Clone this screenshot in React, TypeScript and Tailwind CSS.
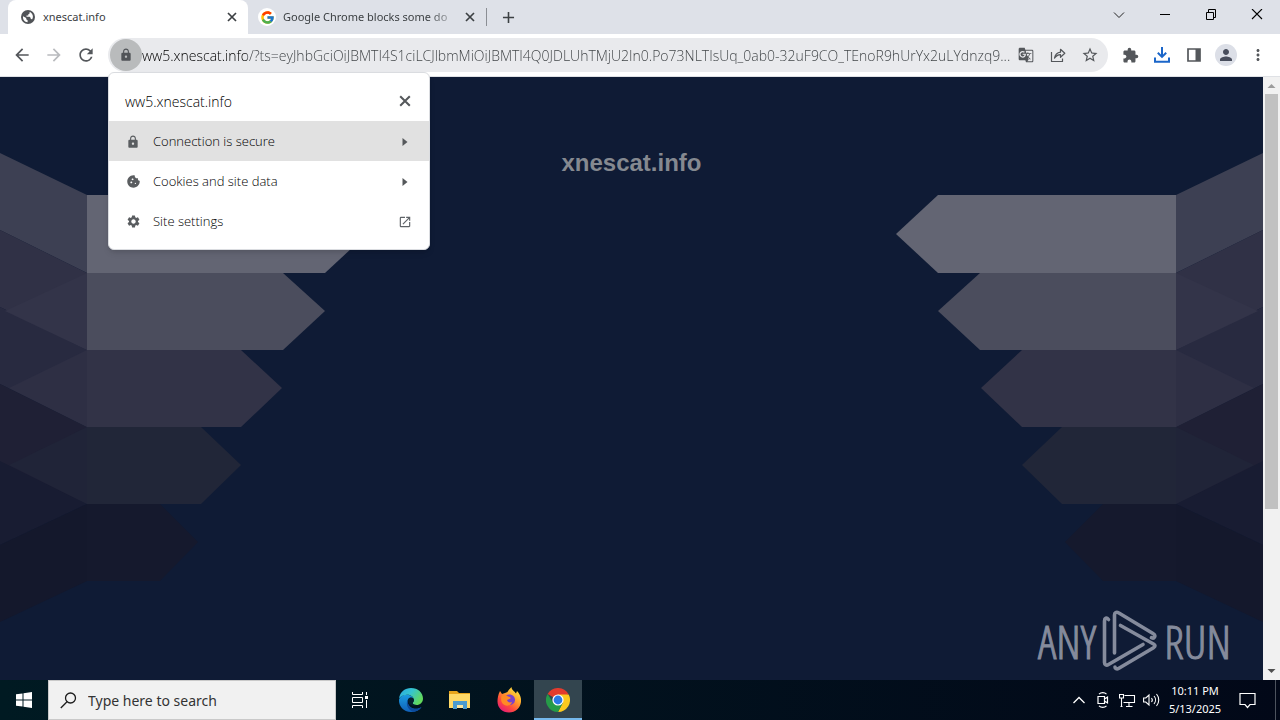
import type { ReactNode } from "react";
import {
  MdAdd,
  MdArrowBack,
  MdArrowForward,
  MdCookie,
  MdExtension,
  MdGTranslate,
  MdLock,
  MdMoreVert,
  MdOpenInNew,
  MdPerson,
  MdRefresh,
  MdSettings,
  MdStarBorder,
} from "react-icons/md";
import { FcGoogle } from "react-icons/fc";

const URL_TEXT =
  "ww5.xnescat.info/?ts=eyJhbGciOiJBMTI4S1ciLCJlbmMiOiJBMTI4Q0JDLUhTMjU2In0.Po73NLTIsUq_0ab0-32uF9CO_TEnoR9hUrYx2uLYdnzq9...";

function IconButton({ label, className = "", children }: { label: string; className?: string; children: ReactNode }) {
  return (
    <button type="button" aria-label={label} className={`flex h-8 w-8 shrink-0 items-center justify-center ${className}`}>
      {children}
    </button>
  );
}

function CloseIcon({ size }: { size: number }) {
  return (
    <svg width={size} height={size} viewBox="0 0 10 10" fill="none" stroke="currentColor" strokeWidth="1.700" aria-hidden="true">
      <path d="m1 1 8 8M9 1 1 9" />
    </svg>
  );
}

function GlobeIcon() {
  return (
    <svg width="14" height="14" viewBox="0 0 14 14" className="shrink-0" aria-hidden="true">
      <circle cx="7" cy="7" r="7" fill="#505357" />
      <path d="M2 6.2 5.2 8v1.3l1.4 1v1.9C3.800 12 1.700 9.700 2 6.200Z" fill="#fff" />
      <path d="M6 2.200 8.600 1.900v1.500L7.300 4.300v1.300H5.500v1.200h3.200l1 1.200v1l1.500.2C13.100 6 11 2.500 8.600 1.900L6 2.200Z" fill="#fff" />
    </svg>
  );
}

function TabStrip() {
  return (
    <header className="flex h-[34px] shrink-0 items-stretch bg-[#dee1e8]">
      <div role="tablist" className="flex items-stretch pl-2">
        <div role="tab" aria-selected="true" className="flex w-60 items-center rounded-t-lg bg-white pr-2 pl-[13px]">
          <GlobeIcon />
          <span className="ml-2 flex-1 text-[11px] text-[#3c4043]">xnescat.info</span>
          <button type="button" aria-label="Close tab" className="flex h-4 w-4 items-center justify-center text-[#3c4043]">
            <CloseIcon size={10} />
          </button>
        </div>
        <div role="tab" aria-selected="false" className="my-2 flex w-[239px] items-center border-r border-[#8b8e94] pr-2 pl-[10px]">
          <span className="flex h-[18px] w-[18px] items-center justify-center rounded-full bg-white">
            <FcGoogle size={15} />
          </span>
          <span className="ml-[7px] shrink-0 text-[11px] whitespace-nowrap text-[#3c4043] [mask-image:linear-gradient(to_right,black_145px,transparent_178px)]">
            Google Chrome blocks some do
          </span>
          <button type="button" aria-label="Close tab" className="ml-auto flex h-4 w-4 items-center justify-center text-[#3c4043]">
            <CloseIcon size={10} />
          </button>
        </div>
      </div>
      <button type="button" aria-label="New tab" className="ml-3 text-[#3c4043]">
        <MdAdd size={19} />
      </button>
      <div className="ml-auto flex items-center pb-1">
        <button type="button" aria-label="Search tabs" className="flex w-[46px] justify-center">
          <svg width="12" height="12" viewBox="0 0 12 12" fill="none" stroke="#222" aria-hidden="true">
            <path d="m1 3.500 5 5 5-5" />
          </svg>
        </button>
        <button type="button" aria-label="Minimize" className="flex w-[46px] justify-center">
          <svg width="12" height="12" viewBox="0 0 12 12" fill="none" stroke="#000" aria-hidden="true">
            <path d="M1 5.500h10" />
          </svg>
        </button>
        <button type="button" aria-label="Restore" className="flex w-[46px] justify-center">
          <svg width="12" height="12" viewBox="0 0 12 12" fill="none" stroke="#000" aria-hidden="true">
            <path d="M1.500 3.500h7v7h-7zM3.500 3.500v-3h7v8h-2" />
          </svg>
        </button>
        <button type="button" aria-label="Close window" className="flex w-[46px] justify-center">
          <svg width="12" height="12" viewBox="0 0 12 12" fill="none" stroke="#000" strokeWidth="1.1" aria-hidden="true">
            <path d="m1 0 10 10M11 0 1 10" />
          </svg>
        </button>
      </div>
    </header>
  );
}

function Toolbar() {
  return (
    <div className="flex h-[43px] shrink-0 items-center border-b border-[#dfe1e5] bg-white pr-[6px] pl-[6px] text-[#54575b]">
      <IconButton label="Back">
        <MdArrowBack size={20} />
      </IconButton>
      <IconButton label="Forward" className="text-[#b9bbbe]">
        <MdArrowForward size={20} />
      </IconButton>
      <IconButton label="Reload">
        <MdRefresh size={20} />
      </IconButton>
      <div className="relative ml-[6px] flex h-[34px] min-w-0 flex-1 items-center rounded-full bg-[#e9eaed] pr-[2px] pl-[2px]">
        <button
          type="button"
          aria-label="View site information"
          aria-expanded="true"
          className="flex h-8 w-8 shrink-0 items-center justify-center rounded-full bg-[#b9bbbc] text-[#505357]"
        >
          <MdLock size={14} />
        </button>
        <input
          aria-label="Address and search bar"
          readOnly
          value={URL_TEXT}
          className="min-w-0 flex-1 bg-[linear-gradient(to_right,#000_105px,#3c4043_105px)] bg-clip-text font-['Open_Sans',sans-serif] text-[14px] font-light text-transparent outline-none"
        />
        <IconButton label="Translate this page">
          <MdGTranslate size={16} />
        </IconButton>
        <IconButton label="Share this page">
          <svg width="16" height="16" viewBox="0 0 16 16" fill="none" stroke="currentColor" strokeWidth="1.200" aria-hidden="true">
            <path d="M1.500 5v9.500h11V11.500M4.500 11.200c.6-3.700 2.600-5.600 6-6V2.300l4.300 4-4.300 4V7.600c-2.700.1-4.500 1.300-6 3.600Z" strokeLinejoin="round" />
          </svg>
        </IconButton>
        <IconButton label="Bookmark this tab">
          <MdStarBorder size={18} />
        </IconButton>
        <SiteInfo />
      </div>
      <IconButton label="Extensions" className="ml-[6px]">
        <MdExtension size={17} />
      </IconButton>
      <IconButton label="Downloads" className="text-[#1b66c9]">
        <svg width="16" height="16" viewBox="0 0 16 16" fill="none" stroke="currentColor" strokeWidth="2" aria-hidden="true">
          <path d="M8 0v9.500M3.800 5.700 8 9.900l4.200-4.200M1 10.500V14.800h14v-4.300" />
        </svg>
      </IconButton>
      <IconButton label="Side panel">
        <svg width="14" height="14" viewBox="0 0 14 14" aria-hidden="true">
          <path d="M1 1h12v12H1z" fill="none" stroke="currentColor" strokeWidth="1.700" />
          <path d="M8.500 1H13v12H8.500z" fill="currentColor" />
        </svg>
      </IconButton>
      <IconButton label="Profile">
        <span className="flex h-[22px] w-[22px] items-center justify-center rounded-full bg-[#dcdfe7] text-[#484d5c]">
          <MdPerson size={18} />
        </span>
      </IconButton>
      <IconButton label="Menu">
        <MdMoreVert size={18} />
      </IconButton>
    </div>
  );
}

function Caret() {
  return (
    <svg width="12" height="10" viewBox="0 0 12 10" fill="#55585b" aria-hidden="true">
      <path d="M3.500 1v8l5-4z" />
    </svg>
  );
}

function InfoRow({ icon, label, end, active = false }: { icon: ReactNode; label: string; end: ReactNode; active?: boolean }) {
  return (
    <button
      type="button"
      className={`flex h-10 w-full items-center px-4 pt-px font-['Open_Sans',sans-serif] text-[13px] font-light text-black ${active ? "bg-[#e1e1e1]" : ""}`}
    >
      <span className="flex w-4 justify-center text-[#5a5d60]">{icon}</span>
      <span className="ml-3 flex-1 text-left">{label}</span>
      <span className="flex w-4 justify-center text-[#5f6368]">{end}</span>
    </button>
  );
}

function SiteInfo() {
  return (
    <section
      aria-label="Site information"
      className="absolute top-[34px] left-0 z-20 w-[322px] rounded-md border border-[#dadce0] bg-white pt-2 pb-2 shadow-md"
    >
      <div className="flex h-10 items-center justify-between px-4">
        <h2 className="font-['Open_Sans',sans-serif] text-[14px] font-light text-black">ww5.xnescat.info</h2>
        <button type="button" aria-label="Close" className="flex w-4 justify-center text-[#55585b]">
          <CloseIcon size={12} />
        </button>
      </div>
      <InfoRow active icon={<MdLock size={14} />} label="Connection is secure" end={<Caret />} />
      <InfoRow icon={<MdCookie size={15} />} label="Cookies and site data" end={<Caret />} />
      <InfoRow icon={<MdSettings size={15} />} label="Site settings" end={<MdOpenInNew size={14} />} />
    </section>
  );
}

function Ribbons({ className }: { className: string }) {
  return (
    <svg width="370" height="603" viewBox="0 77 370 603" className={className} aria-hidden="true">
      <path d="M0 153 87 195v78L0 230z" fill="#3d4053" />
      <path d="M0 230 87 273v77L0 307z" fill="#303146" />
      <path d="M0 307 87 350v77L0 384z" fill="#282a40" />
      <path d="M0 384 87 427v77L0 465z" fill="#1f2035" />
      <path d="M0 461 87 504 0 545z" fill="#181c32" />
      <path d="M0 545 87 504v77L0 622z" fill="#14182c" />
      <path d="M87 273v77L5 311z" fill="#333449" />
      <path d="M87 350v77L9 388z" fill="#2e2f44" />
      <path d="M87 427v77L9 465z" fill="#202438" />
      <path d="M87 195h238l42 39-42 39H87z" fill="#636573" />
      <path d="M87 273h196l42 38-42 39H87z" fill="#4b4d5d" />
      <path d="M87 350h154l41 38-41 39H87z" fill="#323347" />
      <path d="M87 427h114l40 38-40 39H87z" fill="#212638" />
      <path d="M87 504h73l38 38-38 39H87z" fill="#15192d" />
    </svg>
  );
}

function Watermark() {
  return (
    <div className="absolute right-8 bottom-2 flex items-center gap-[6px] font-['Open_Sans_Condensed_Light','Open_Sans_Condensed','Noto_Sans_ExtraCondensed','Roboto_Condensed','Liberation_Sans_Narrow',sans-serif] text-[46px] leading-[60px] font-light text-[#858b9c] [-webkit-text-stroke:1px_#858b9c]">
      <span>ANY</span>
      <svg width="56" height="62" viewBox="0 0 56 62" fill="none" stroke="currentColor" strokeWidth="3.600" strokeLinecap="round" strokeLinejoin="round" aria-hidden="true">
        <path d="M6.500 9.500C4.500 7 2.500 8 2.500 11v41.500c0 2.500 2 3.200 4 2L41 34.500" />
        <path d="M12.500 43V5c0-2.500 2-3.500 4-2.200L51 23.500c3.500 2.200 1.200 5.500-1.500 4.200" />
        <path d="M18.500 15.500 51.500 34c2 1.200 2 2.500 0 3.700L16.500 58.500c-1.800 1-3.500 0-3.500-1.500" />
      </svg>
      <span>RUN</span>
    </div>
  );
}

function Page() {
  return (
    <main className="flex min-h-0 flex-1">
      <div className="relative min-w-0 flex-1 overflow-hidden bg-[#0f1b35]">
        <Ribbons className="absolute top-0 left-0" />
        <Ribbons className="absolute top-0 right-0 -scale-x-100" />
        <h1 className="relative pt-[70px] text-center font-['Liberation_Sans',sans-serif] text-[24px] leading-8 font-bold text-[#858990]">
          xnescat.info
        </h1>
        <Watermark />
      </div>
      <div className="flex w-[17px] shrink-0 flex-col items-center bg-[#f1f1f1]">
        <svg width="17" height="17" viewBox="0 0 17 17" fill="#9c9c9c" aria-hidden="true">
          <path d="M4.500 11h8l-4-4z" />
        </svg>
        <div className="h-[415px] w-[13px] bg-[#c1c1c1]" />
        <svg width="17" height="17" viewBox="0 0 17 17" fill="#505050" className="mt-auto" aria-hidden="true">
          <path d="M4.500 6h8l-4 4z" />
        </svg>
      </div>
    </main>
  );
}

function EdgeLogo() {
  return (
    <svg width="26" height="26" viewBox="0 0 26 26" aria-hidden="true">
      <defs>
        <linearGradient id="edge-top" x1="0" y1="0" x2="1" y2="0.500">
          <stop offset="0" stopColor="#2aa9e0" />
          <stop offset="0.500" stopColor="#35c4d0" />
          <stop offset="1" stopColor="#62d95c" />
        </linearGradient>
        <linearGradient id="edge-low" x1="0" y1="0" x2="0" y2="1">
          <stop offset="0" stopColor="#1b9be0" />
          <stop offset="1" stopColor="#1060b8" />
        </linearGradient>
      </defs>
      <path d="M1 12.500C2 9.500 5 7.700 8.800 7.700c3.200 0 5.700 1.500 6.700 3.500-3.200-2-6 .3-6 3.300 0 4.500 4 7.300 8.200 7.300 2.300 0 4.300-.8 5.800-1.800C21.500 23.300 17.500 25 13 25 5.500 25 .5 19 1 12.500Z" fill="url(#edge-low)" />
      <path d="M1 11.500C2 5 7 1 13 1c7 0 12 4.700 12 10.500 0 4-3 6.500-6.500 6.500-3 0-4.500-1.200-4-2.200 1-1 1.500-2 1.300-3.500C15.200 9 12 7.500 8.800 7.700 5 8 2.200 9.500 1 11.500Z" fill="url(#edge-top)" />
      <path d="M9.500 12.500C7.500 18 10 23 15.500 24.800 19 24.300 22 22.500 23.500 20c-1.500 1-3.500 1.800-5.800 1.800-4.200 0-8.200-2.800-8.200-9.300Z" fill="#0c4a9c" />
      <path d="M10 12.500c1-2 4-2.300 5.500-.5.800 1.500.3 2.800-.7 3.800-.5 1 1 2.200 4 2.200-3.500 2-9 0-8.800-5.500Z" fill="#06202f" />
    </svg>
  );
}

function FolderLogo() {
  return (
    <svg width="24" height="22" viewBox="0 0 24 22" aria-hidden="true">
      <path d="M1 2h8l2 2h11v15H1z" fill="#e8a51c" />
      <path d="M1 5h21v14H1z" fill="#ffd967" />
      <path d="M5 12h14v8h-4v-4H9v4H5z" fill="#4a9bd0" />
      <path d="M9 16h6v3H9z" fill="#fbe6a0" />
    </svg>
  );
}

function FirefoxLogo() {
  return (
    <svg width="24" height="26" viewBox="0 0 24 26" aria-hidden="true">
      <defs>
        <linearGradient id="fox" x1="0.900" y1="0" x2="0.200" y2="1">
          <stop offset="0" stopColor="#fff04a" />
          <stop offset="0.400" stopColor="#ffa32b" />
          <stop offset="0.700" stopColor="#ff4b3c" />
          <stop offset="1" stopColor="#e3167d" />
        </linearGradient>
      </defs>
      <path d="M3 4 5 7l3-1 2.500-1c1-2 2-3 4-5 0 3 3 4 4.500 6.500L20 4c3 3 4.500 7 4 11-.8 6-5.500 10.500-12 10.500S.5 21 .5 14.500C.5 11 1 8 3 4Z" fill="url(#fox)" />
      <path d="M7.500 11.500c.5-3 3-4.500 6-4 3 .8 4.800 3 4.500 6-.4 3-3 4.700-5.800 4.500-3-.3-5.200-3-4.700-6.500Z" fill="#7941cc" />
      <path d="M4.500 9c2-1.500 5-1 6.500.5 2 .3 2.800 1 2.500 2l-3.500 1.500c.5 2.500 3 3 5 2-1 3.500-4.500 4.500-7.500 3C4.500 16.500 3.500 13 4.500 9Z" fill="#ff8a25" />
    </svg>
  );
}

function ChromeLogo() {
  return (
    <svg width="24" height="24" viewBox="0 0 24 24" aria-hidden="true">
      <path d="M12 12 1.600 6A12 12 0 0 1 22.400 6z" fill="#e33b2e" />
      <path d="M12 6.500h10.700A12 12 0 0 1 12 24l4.800-9.300z" fill="#fcc91f" />
      <path d="M7.200 14.700 1.600 6A12 12 0 0 0 12 24l4.800-9.300z" fill="#269b48" />
      <circle cx="12" cy="12" r="5.600" fill="#fff" />
      <circle cx="12" cy="12" r="4.400" fill="#2b79e6" />
    </svg>
  );
}

function TaskButton({ label, active = false, children }: { label: string; active?: boolean; children: ReactNode }) {
  return (
    <button
      type="button"
      aria-label={label}
      className={`flex h-10 w-12 items-center justify-center ${active ? "border-b-2 border-[#76b9ed] bg-[#33454f] pt-[2px]" : ""}`}
    >
      {children}
    </button>
  );
}

function Taskbar() {
  return (
    <footer className="flex h-10 shrink-0 items-center bg-linear-to-r from-[#001a22] to-[#020818] text-white">
      <TaskButton label="Start">
        <svg width="16" height="16" viewBox="0 0 16 16" fill="#fff" aria-hidden="true">
          <path d="M0 2.300 6.500 1.400v6.100H0zM7.500 1.200 16 0v7.500H7.500zM0 8.500h6.500v6.100L0 13.700zM7.500 8.500H16V16l-8.500-1.200z" />
        </svg>
      </TaskButton>
      <label className="flex h-10 w-72 items-center gap-[11px] border border-[#c9c9c9] bg-[#f1f1f1] pl-[11px]">
        <svg width="17" height="17" viewBox="0 0 17 17" fill="none" stroke="#1c1c1c" strokeWidth="1.300" aria-hidden="true">
          <circle cx="10.500" cy="6" r="5" />
          <path d="M7 9.700.8 16" />
        </svg>
        <input
          aria-label="Search"
          placeholder="Type here to search"
          className="min-w-0 flex-1 bg-transparent text-[14px] outline-none placeholder:text-[#333]"
        />
      </label>
      <TaskButton label="Task view">
        <svg width="18" height="16" viewBox="0 0 18 16" fill="none" stroke="#fff" aria-hidden="true">
          <path d="M1.500 0v2.500h10V0M1.500 5.500h10v5h-10zM1.500 16v-2.500h10V16M15.500 0v3M15.500 8v8" />
          <path d="M14 4h3v3h-3z" fill="#fff" stroke="none" />
        </svg>
      </TaskButton>
      <div className="flex items-center gap-[1px] pl-[3px]">
        <TaskButton label="Microsoft Edge">
          <EdgeLogo />
        </TaskButton>
        <TaskButton label="File Explorer">
          <FolderLogo />
        </TaskButton>
        <TaskButton label="Firefox">
          <FirefoxLogo />
        </TaskButton>
        <TaskButton label="Google Chrome" active>
          <ChromeLogo />
        </TaskButton>
      </div>
      <div className="ml-auto flex items-center">
        <button type="button" aria-label="Show hidden icons" className="flex w-6 justify-center">
          <svg width="14" height="8" viewBox="0 0 14 8" fill="none" stroke="#fff" strokeWidth="1.300" aria-hidden="true">
            <path d="m1.500 7 5.500-5.500L12.500 7" />
          </svg>
        </button>
        <button type="button" aria-label="Meet now" className="flex w-6 justify-center">
          <svg width="14" height="18" viewBox="0 0 14 18" fill="none" stroke="#fff" strokeWidth="1.200" aria-hidden="true">
            <path d="M2 5.500h6.500v7H2zM8.500 8 11.500 6v6l-3-2M3 3.200c2-2 5.500-2 7.500 0M3 14.800c2 2 5.500 2 7.500 0" />
          </svg>
        </button>
        <button type="button" aria-label="Network" className="flex w-6 justify-center">
          <svg width="17" height="15" viewBox="0 0 17 15" fill="none" stroke="#fff" strokeWidth="1.100" aria-hidden="true">
            <path d="M5.500 2.500h10v7h-11M.5 1.500h4v3.500h-4zM2.500 5v8M10 9.500v4M7 13.500h6.500M1.500 13.500h2" />
          </svg>
        </button>
        <button type="button" aria-label="Volume" className="flex w-6 justify-center">
          <svg width="17" height="14" viewBox="0 0 17 14" fill="none" stroke="#fff" strokeWidth="1.100" aria-hidden="true">
            <path d="M.6 5h2.200L6 2v10L2.800 9H.6zM8.500 5c1 1.200 1 2.800 0 4M11 3c2 2.300 2 5.700 0 8M13.500 1c3 3.500 3 8.500 0 12" />
          </svg>
        </button>
        <time className="w-16 text-center text-[11px] leading-[18px]">
          <span className="block">10:11 PM</span>
          <span className="block">5/13/2025</span>
        </time>
        <button type="button" aria-label="Notifications" className="flex w-10 justify-center">
          <svg width="17" height="17" viewBox="0 0 17 17" fill="none" stroke="#fff" strokeWidth="1.200" aria-hidden="true">
            <path d="M1 1.500h15v11h-5l-2.500 3-2.500-3H1z" />
          </svg>
        </button>
        <div className="ml-2 h-10 w-[5px] border-l border-[#4d535e]" />
      </div>
    </footer>
  );
}

export default function App() {
  return (
    <div className="flex h-screen flex-col overflow-hidden font-['Noto_Sans','Open_Sans',sans-serif]">
      <TabStrip />
      <Toolbar />
      <Page />
      <Taskbar />
    </div>
  );
}
